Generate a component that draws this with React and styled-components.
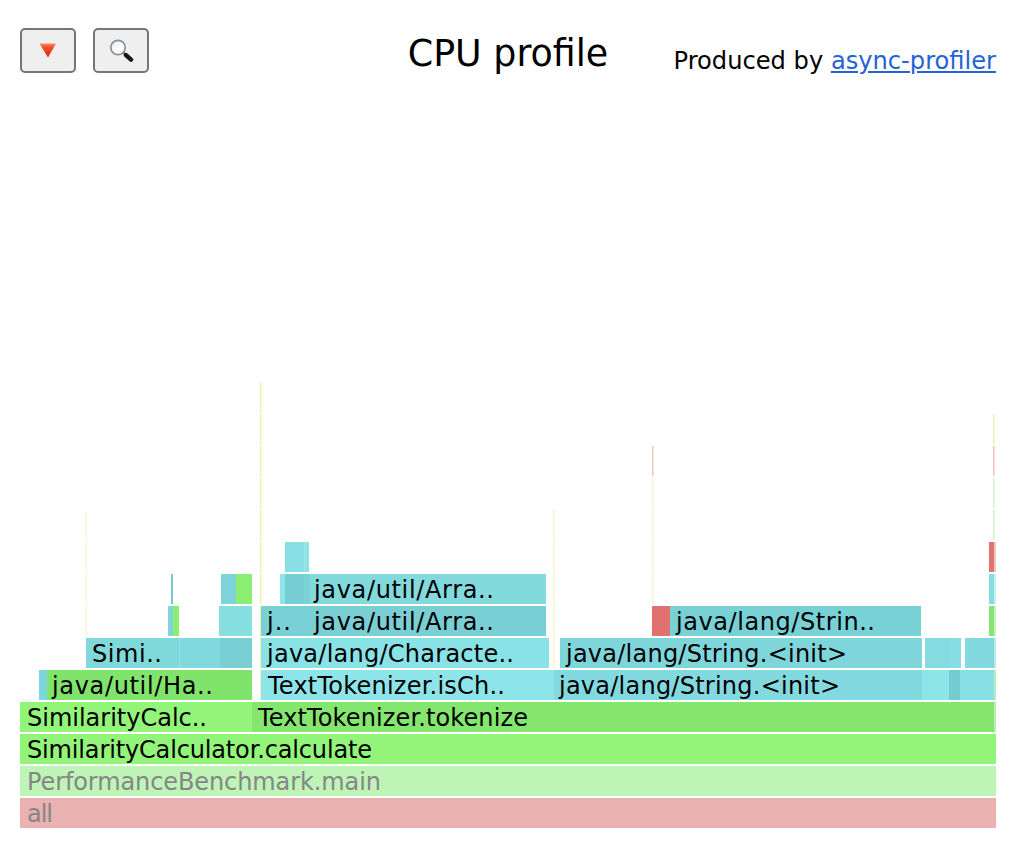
import React from 'react';
import styled, { createGlobalStyle } from 'styled-components';

const GlobalStyle = createGlobalStyle`
  html, body {
    margin: 0;
    background: #fff;
    font-family: "DejaVu Sans", Verdana, sans-serif;
  }
`;

const Page = styled.div`
  width: 1015px;
  height: 850px;
  box-sizing: border-box;
  padding: 28px 19px 0 20px;
  overflow: hidden;
`;

const Header = styled.header`
  display: grid;
  grid-template-columns: 1fr auto 1fr;
  align-items: start;
  height: 352px;
`;

const Toolbar = styled.div`
  display: flex;
  gap: 17px;
`;

const ToolButton = styled.button`
  width: 56px;
  height: 45px;
  padding: 0;
  display: flex;
  align-items: center;
  justify-content: center;
  background: #efefef;
  border: 2px solid #767676;
  border-radius: 5px;
`;

const Title = styled.h1`
  margin: 5px 0 0;
  font-size: 36.4px;
  line-height: 42px;
  font-weight: 400;
  color: #000;
`;

const Credit = styled.p`
  margin: 18px 0 0;
  font-size: 24.15px;
  line-height: 30px;
  text-align: right;
  color: #000;
  white-space: nowrap;
`;

const CreditLink = styled.a`
  color: #2463d6;
  text-decoration: underline;
`;

const Chart = styled.svg`
  display: block;
  width: 976px;
  height: 448px;
`;

const Label = styled.text`
  font-family: "DejaVu Sans", Verdana, sans-serif;
  font-size: 24px;
  fill: ${p => (p.$dim ? '#868686' : '#000')};
`;

const ROW = h => 798 - h * 32;

// [level, x, right edge, colour]
const frames = [
  [0, 20, 996, '#e9b1af'],
  [1, 20, 996, '#bff4b7'],
  [2, 20, 996, '#92f479'],
  [3, 20, 252, '#92f479'],
  [3, 252, 994, '#84e66e'],
  [3, 994, 996, '#bfeab0'],

  [4, 39, 47, '#7dd5dd'],
  [4, 47, 252, '#80e36c'],
  [4, 261, 554, '#8ee5e9'],
  [4, 554, 922, '#82d9df'],
  [4, 922, 949, '#8ee5e8'],
  [4, 949, 960, '#75cbd0'],
  [4, 960, 994, '#89e0e4'],
  [4, 994, 996, '#b8eac0'],

  [5, 86, 179, '#7fd9db'],
  [5, 179, 180, '#8fe0e2'],
  [5, 180, 220, '#80d9dc'],
  [5, 220, 252, '#79cfd3'],
  [5, 261, 549, '#88e2e6'],
  [5, 560, 922, '#7ed6db'],
  [5, 925, 949, '#85dbe0'],
  [5, 949, 961, '#88dee2'],
  [5, 965, 994, '#82d9dd'],
  [5, 994, 996, '#b9e8e8'],

  [6, 168, 173, '#7ed5da'],
  [6, 173, 179, '#8bed72'],
  [6, 219, 252, '#88dfe2'],
  [6, 261, 310, '#79d1d5'],
  [6, 310, 546, '#79cfd3'],
  [6, 652, 670, '#e0716f'],
  [6, 670, 921, '#78d1d4'],
  [6, 989, 994, '#85e570'],
  [6, 994, 996, '#c8f0c0'],

  [7, 171, 173, '#6fcdcf'],
  [7, 221, 236, '#7dd4d8'],
  [7, 236, 252, '#8bed72'],
  [7, 280, 285, '#8ee6ea'],
  [7, 285, 304, '#77cdd1'],
  [7, 304, 310, '#7ad2d5'],
  [7, 310, 546, '#82dadd'],
  [7, 989, 994, '#85dde2'],
  [7, 994, 996, '#c5eef0'],

  [8, 285, 304, '#89dfe3'],
  [8, 304, 305, '#9ce6e8'],
  [8, 305, 309, '#8de2e6'],
  [8, 989, 994, '#df7572'],
  [8, 994, 996, '#f0c8c0'],
];

// [level, x, width, text, dimmed]
const labels = [
  [0, 27, 26, 'all', true],
  [1, 27, 354, 'PerformanceBenchmark.main', true],
  [2, 27, 345, 'SimilarityCalculator.calculate'],
  [3, 27, 180, 'SimilarityCalc..'],
  [3, 258, 270, 'TextTokenizer.tokenize'],
  [4, 52, 161, 'java/util/Ha..'],
  [4, 268, 237, 'TextTokenizer.isCh..'],
  [4, 559, 281, 'java/lang/String.<init>'],
  [5, 92, 70, 'Simi..'],
  [5, 267, 247, 'java/lang/Characte..'],
  [5, 566, 281, 'java/lang/String.<init>'],
  [6, 267, 24, 'j..'],
  [6, 314, 180, 'java/util/Arra..'],
  [6, 676, 199, 'java/lang/Strin..'],
  [7, 314, 180, 'java/util/Arra..'],
];

// one pixel wide frames: [x, level, colour]
const hairlines = [
  ...[6, 7, 8, 9].map(l => [85.5, l, '#f7f7d8']),
  ...[4, 5, 6, 7, 8, 9, 10, 11, 12, 13].map(l => [260, l, '#f2f2ac']),
  ...[5, 6, 7, 8, 9].map(l => [553, l, '#f5f5cc']),
  ...[6, 7, 8, 9, 10].map(l => [652, l, '#f6f6d0']),
  [652, 11, '#f4c8c4'],
  [993, 9, '#d4f2c8'],
  [993, 10, '#d4f2c8'],
  [993, 11, '#f4c4c0'],
  [993, 12, '#f2f2b0'],
];

const FlameIcon = () => (
  <svg width="20" height="18" viewBox="0 0 20 18">
    <defs>
      <linearGradient id="tri" x1="0" y1="0" x2="0" y2="1">
        <stop offset="0" stopColor="#f98a6c" />
        <stop offset="0.25" stopColor="#f4512c" />
        <stop offset="1" stopColor="#d42a12" />
      </linearGradient>
    </defs>
    <path d="M1.5 1.5 H18 L10 15.5 Z" fill="url(#tri)" />
  </svg>
);

const SearchIcon = () => (
  <svg width="26" height="26" viewBox="0 0 26 26">
    <defs>
      <linearGradient id="lens" x1="0" y1="0" x2="1" y2="1">
        <stop offset="0" stopColor="#dfe5ea" />
        <stop offset="0.6" stopColor="#ffffff" />
      </linearGradient>
    </defs>
    <circle cx="10" cy="9.5" r="7.2" fill="url(#lens)" stroke="#87929b" strokeWidth="1.7" />
    <path d="M15.5 15 L18 17.2" stroke="#6a6a6a" strokeWidth="2.4" />
    <path d="M18 17.2 L23 21.6" stroke="#161616" strokeWidth="4.4" strokeLinecap="round" />
  </svg>
);

const App = () => {
  return (
    <Page>
      <GlobalStyle />
      <Header>
        <Toolbar>
          <ToolButton aria-label="Reverse"><FlameIcon /></ToolButton>
          <ToolButton aria-label="Search"><SearchIcon /></ToolButton>
        </Toolbar>
        <Title>CPU profile</Title>
        <Credit>
          Produced by <CreditLink href="#">async-profiler</CreditLink>
        </Credit>
      </Header>
      <Chart viewBox="20 380 976 448">
        {hairlines.map(([x, level, color]) => (
          <rect key={`${x}-${level}`} x={x} y={ROW(level)} width="1.5" height="30" fill={color} />
        ))}
        {frames.map(([level, x, end, color]) => (
          <rect key={`${level}-${x}`} x={x} y={ROW(level)} width={end - x} height="30" fill={color} />
        ))}
        {labels.map(([level, x, width, text, dim]) => (
          <Label key={`${level}-${x}`} x={x} y={ROW(level) + 24} textLength={width} $dim={dim}>{text}</Label>
        ))}
      </Chart>
    </Page>
  );
};

export default App;
